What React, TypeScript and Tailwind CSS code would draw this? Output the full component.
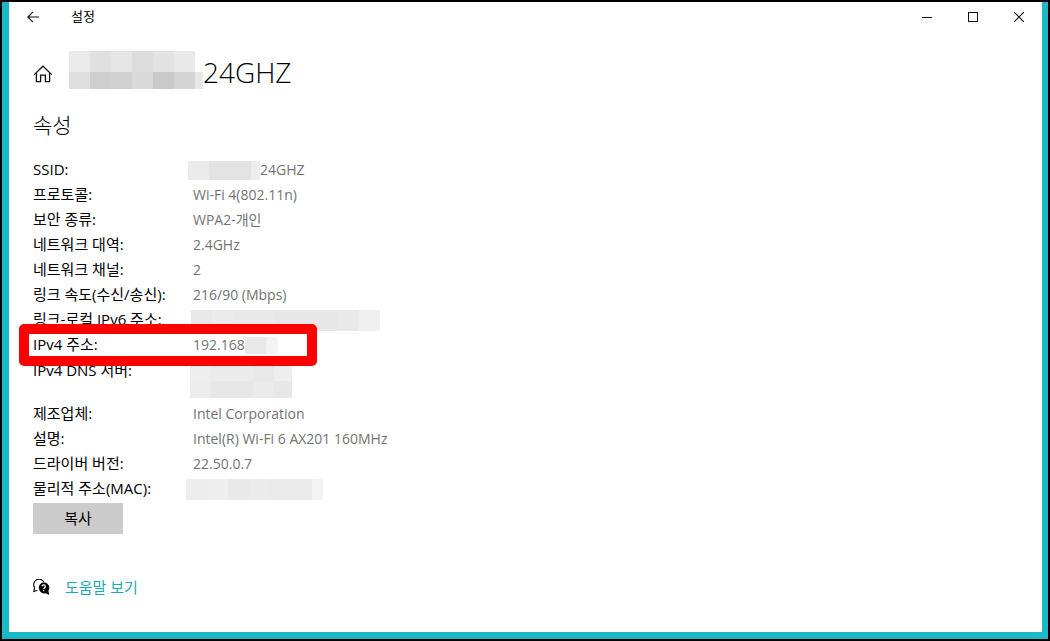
import type { ReactNode } from 'react'

// One mosaic is a list of lines, each line a list of cell classes
function Mosaic({ lines, className = '' }: { lines: string[][]; className?: string }) {
    return (
        <span aria-hidden="true" className={`flex shrink-0 flex-col ${className}`}>
            {lines.map((cells, i) => (
                <span key={i} className="flex">
                    {cells.map((cell, j) => (
                        <span key={j} className={cell} />
                    ))}
                </span>
            ))}
        </span>
    )
}

interface Property {
    label: string
    value: ReactNode
    marked?: boolean
    tall?: boolean
}

const properties: Property[] = [
    {
        label: 'SSID:',
        value: (
            <>
                <Mosaic
                    className="mt-px -ml-[5px]"
                    lines={[['w-[21px] h-[19px] bg-[#ebebeb]', 'w-[42px] h-[19px] bg-[#e3e3e3]', 'w-[9px] h-[19px] bg-[#ededed]']]}
                />
                24GHZ
            </>
        ),
    },
    { label: '프로토콜:', value: 'Wi-Fi 4(802.11n)' },
    { label: '보안 종류:', value: 'WPA2-개인' },
    { label: '네트워크 대역:', value: '2.4GHz' },
    { label: '네트워크 채널:', value: '2' },
    { label: '링크 속도(수신/송신):', value: '216/90 (Mbps)' },
    {
        label: '링크-로컬 IPv6 주소:',
        value: (
            <Mosaic
                className="mt-px -ml-[2px]"
                lines={[[
                    'w-[21px] h-[21px] bg-[#e8e8e8]',
                    'w-[21px] h-[21px] bg-[#ebebeb]',
                    'w-[42px] h-[21px] bg-[#e9e9e9]',
                    'w-[63px] h-[21px] bg-[#e7e7e7]',
                    'w-[21px] h-[21px] bg-[#e9e9e9]',
                    'w-[21px] h-[21px] bg-[#f0f0f0]',
                ]]}
            />
        ),
    },
    {
        label: 'IPv4 주소:',
        marked: true,
        value: (
            <>
                192.168
                <Mosaic className="mt-px" lines={[['w-[21px] h-[17px] bg-[#e8e8e8]', 'w-[12px] h-[17px] bg-[#f3f3f3]']]} />
            </>
        ),
    },
    {
        label: 'IPv4 DNS 서버:',
        tall: true,
        value: (
            <Mosaic
                className="-ml-[3px]"
                lines={[
                    ['w-[21px] h-[21px] bg-[#eeeeee]', 'w-[42px] h-[21px] bg-[#ebebeb]', 'w-[21px] h-[21px] bg-[#e8e8e8]', 'w-[18px] h-[21px] bg-[#eeeeee]'],
                    ['w-[21px] h-[17px] bg-[#ececec]', 'w-[42px] h-[17px] bg-[#e7e7e7]', 'w-[21px] h-[17px] bg-[#ebebeb]', 'w-[18px] h-[17px] bg-[#e7e7e7]'],
                ]}
            />
        ),
    },
    { label: '제조업체:', value: 'Intel Corporation' },
    { label: '설명:', value: 'Intel(R) Wi-Fi 6 AX201 160MHz' },
    { label: '드라이버 버전:', value: '22.50.0.7' },
    {
        label: '물리적 주소(MAC):',
        value: (
            <Mosaic
                className="mt-px -ml-[7px]"
                lines={[[
                    'w-[21px] h-[21px] bg-[#ededed]',
                    'w-[21px] h-[21px] bg-[#eeeeee]',
                    'w-[21px] h-[21px] bg-[#e9e9e9]',
                    'w-[21px] h-[21px] bg-[#ebebeb]',
                    'w-[42px] h-[21px] bg-[#eaeaea]',
                    'w-[11px] h-[21px] bg-[#f3f3f3]',
                ]]}
            />
        ),
    },
]

function TitleBar() {
    return (
        <header className="flex h-[30px] items-center justify-between text-[#111]">
            <div className="flex items-center gap-8 pl-[18px]">
                <button aria-label="뒤로">
                    <svg width="12" height="12" viewBox="0 0 12 12" fill="none" stroke="currentColor" strokeWidth="1.1">
                        <path d="M12 6H0.8M6 0.8L0.8 6L6 11.2" />
                    </svg>
                </button>
                <span className="text-[13px] text-black">설정</span>
            </div>
            <div className="flex h-full">
                <button aria-label="최소화" className="flex w-[46px] items-center justify-center">
                    <svg width="10" height="10" viewBox="0 0 10 10" stroke="currentColor" shapeRendering="crispEdges">
                        <path d="M0 5.5H10" />
                    </svg>
                </button>
                <button aria-label="최대화" className="flex w-[46px] items-center justify-center">
                    <svg width="10" height="10" viewBox="0 0 10 10" fill="none" stroke="currentColor" shapeRendering="crispEdges">
                        <rect x="0.5" y="0.5" width="9" height="9" />
                    </svg>
                </button>
                <button aria-label="닫기" className="flex w-[46px] items-center justify-center">
                    <svg width="10" height="10" viewBox="0 0 10 10" stroke="currentColor" strokeWidth="1.2">
                        <path d="M0 0L10 10M10 0L0 10" />
                    </svg>
                </button>
            </div>
        </header>
    )
}

export default function App() {
    return (
        <div className="flex min-h-screen flex-col border-2 border-black font-['Open_Sans','Noto_Sans_CJK_KR',sans-serif]">
            <div className="flex-1 border-r-[6px] border-b-[7px] border-l-[7px] border-[#1bb9c6] bg-white">
                <TitleBar />
                <main className="px-6">
                    <div className="mt-[19px] flex h-[38px] items-center">
                        <svg width="20" height="18" viewBox="0 0 20 18" className="mt-2 mr-4" fill="none" stroke="#111" strokeWidth="1.3">
                            <path d="M1.2 9.6L10 1.2L18.8 9.6" />
                            <path d="M3.4 8V16.6H7.6V10.2H12.4V16.6H16.6V8" />
                        </svg>
                        <Mosaic
                            lines={[
                                ['w-[21px] h-[21px] bg-[#eaeaea]', 'w-[21px] h-[21px] bg-[#e0e0e0]', 'w-[21px] h-[21px] bg-[#e5e5e5]', 'w-[21px] h-[21px] bg-[#dcdcdc]', 'w-[21px] h-[21px] bg-[#e2e2e2]', 'w-[21px] h-[21px] bg-[#e9e9e9]'],
                                ['w-[21px] h-[17px] bg-[#dedede]', 'w-[21px] h-[17px] bg-[#cecece]', 'w-[21px] h-[17px] bg-[#d0d0d0]', 'w-[21px] h-[17px] bg-[#d9d9d9]', 'w-[21px] h-[17px] bg-[#c9c9c9]', 'w-[21px] h-[17px] bg-[#d4d4d4]', 'w-[8px] h-[17px] bg-[#e8e8e8]'],
                            ]}
                        />
                        <h1 className="pt-1 text-[28px] leading-9 font-light text-black">24GHZ</h1>
                    </div>

                    <h2 className="mt-5 text-[21px] leading-8 font-light text-black">속성</h2>

                    <dl className="mt-4 leading-5">
                        {properties.map((item) => (
                            <div
                                key={item.label}
                                className={`relative flex ${item.tall ? 'h-[44px] items-start pt-[3px]' : 'h-[25px] items-center'}`}
                            >
                                <dt className="w-40 shrink-0 pb-px text-[15px] text-black">{item.label}</dt>
                                <dd className="flex items-center text-sm whitespace-nowrap text-[#737373]">{item.value}</dd>
                                {item.marked && (
                                    <span className="absolute -top-2 -left-[14px] z-10 h-[42px] w-[298px] rounded-[5px] border-[10px] border-[#f00]" />
                                )}
                            </div>
                        ))}
                    </dl>

                    <button className="mt-0.5 h-[31px] w-[90px] bg-[#ccc] text-[15px] text-black">복사</button>

                    <div className="mt-[43px] flex h-5 items-center">
                        <svg width="17" height="17" viewBox="0 0 17 17" className="mr-[15px]">
                            <path d="M10.6 2.6A5 5 0 0 0 1.6 8.6L0.8 12.4L4.4 11.2" fill="none" stroke="#000" strokeWidth="1.1" />
                            <path d="M10.5 3.2a5.6 5.6 0 0 1 4.9 8.6l0.9 4.2-3.8-1.7a5.6 5.6 0 1 1-2-11.1z" fill="#000" />
                            <path d="M9 7.2C9.1 5.5 12.3 5.5 12.3 7.4C12.3 8.7 10.7 8.7 10.7 10.1M10.7 11.1V12.3" fill="none" stroke="#fff" strokeWidth="1.2" />
                        </svg>
                        <a href="#help" className="pb-px text-[15px] leading-5 text-[#1ba9b5]">도움말 보기</a>
                    </div>
                </main>
            </div>
        </div>
    )
}
